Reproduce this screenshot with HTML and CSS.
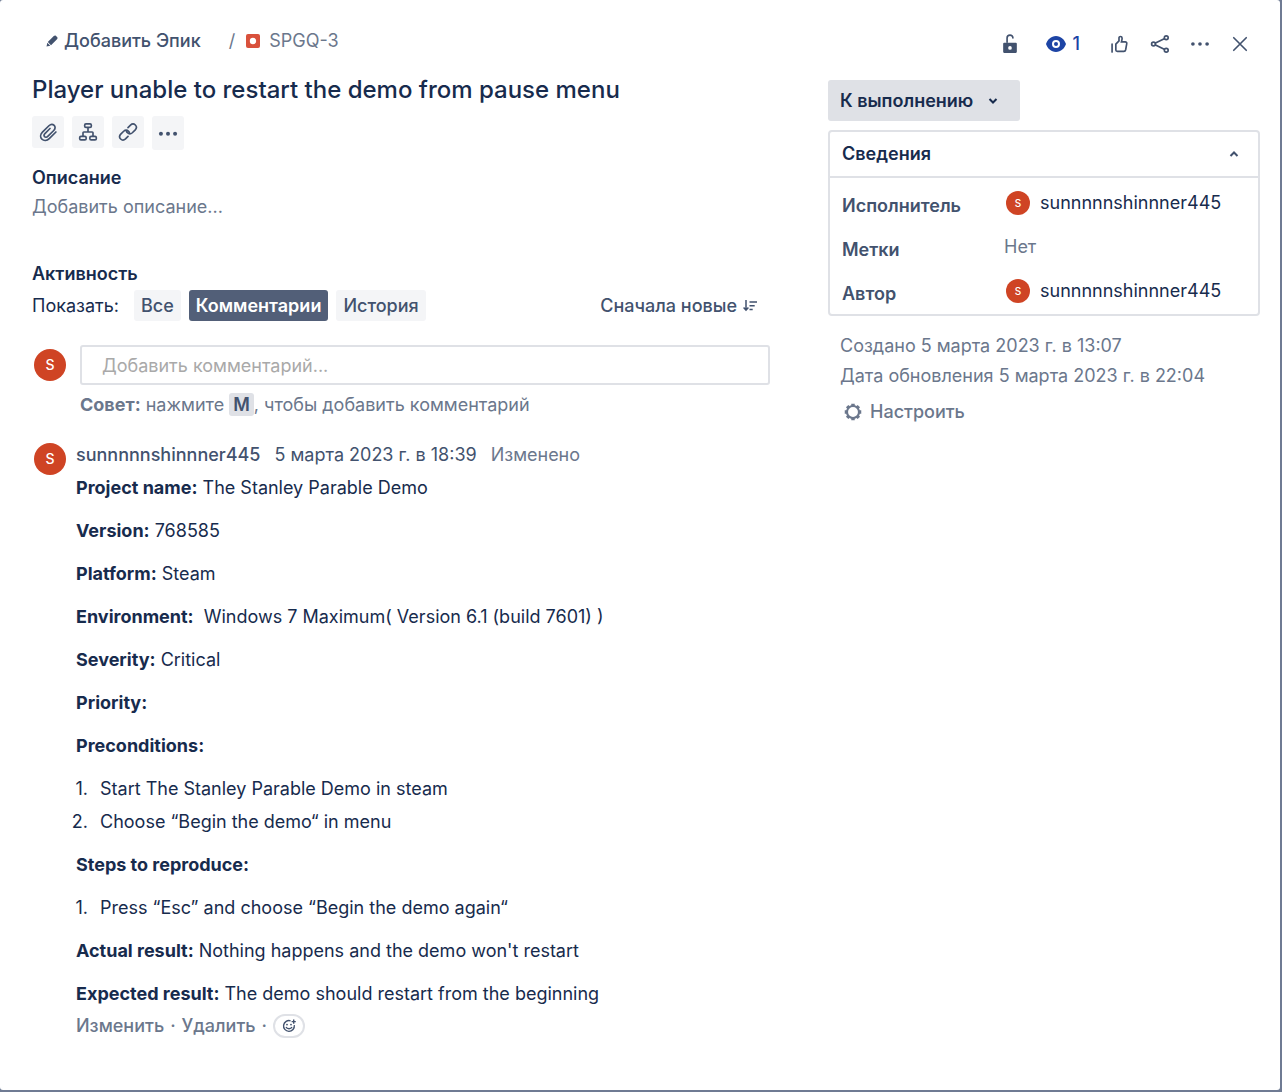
FILE: index.html
```html
<!DOCTYPE html>
<html lang="ru">
<head>
<meta charset="utf-8">
<meta name="viewport" content="width=device-width, initial-scale=1">
<title>SPGQ-3</title>
<link rel="stylesheet" href="styles.css">
</head>
<body>
<main class="dialog">
  <section class="issue">
    <nav class="crumbs">
      <button class="add-epic" type="button">
        <svg class="pencil" viewBox="0 0 12 12"><path d="M0.500 11.500l.8-3.700 3 2.900zM1.800 7l6-6c.8-.7 1.600-.7 2.200-.1l1.100 1.100c.6.600.6 1.500-.1 2.200l-6 6z" fill="currentColor"/></svg>
        Добавить Эпик
      </button>
      <span class="slash">/</span>
      <svg class="bug" viewBox="0 0 14 14"><rect width="14" height="14" rx="2" fill="#d9513c"/><circle cx="7" cy="7" r="3.2" fill="#fff"/></svg>
      <a class="key" href="#">SPGQ-3</a>
    </nav>
    <h1 class="title">Player unable to restart the demo from pause menu</h1>
    <div class="tools">
      <button class="tool" type="button" aria-label="Прикрепить"><svg viewBox="0 0 24 24"><path d="M21.500 12l-8 7.900c-2.700 2.600-6.500 2.800-8.800.7-2.200-2.200-2-5.800.6-8.400l7.800-7.700c2-1.900 4.700-2 6.300-.4s1.400 4.200-.5 6.100l-7.200 7.100c-1.200 1.200-2.800 1.300-3.800.3-.9-1-.8-2.500.4-3.700l6.100-6.100"/></svg></button>
      <button class="tool" type="button" aria-label="Подзадача"><svg viewBox="0 0 24 24"><rect x="8" y="2.300" width="8" height="4.200" rx="1.600"/><rect x="2" y="17.300" width="7.800" height="4.200" rx="1.600"/><rect x="14.200" y="17.300" width="7.800" height="4.200" rx="1.600"/><path d="M12 7v5M6 17v-4c0-.7.300-1 1-1h10c.7 0 1 .3 1 1v4"/></svg></button>
      <button class="tool" type="button" aria-label="Связать"><svg viewBox="0 0 24 24"><path d="M12 6.700l3-3c1.700-1.600 4.200-1.700 5.800-.1s1.500 4.100-.1 5.800l-3.500 3.500c-1.700 1.600-4.300 1.600-5.900 0-.5-.5-.8-1-1-1.600M12 17.300l-3 3c-1.700 1.600-4.200 1.700-5.800.1s-1.500-4.100.1-5.800l3.500-3.500c1.700-1.600 4.300-1.600 5.900 0 .5.500.8 1 1 1.600"/></svg></button>
      <button class="tool tool-more" type="button" aria-label="Ещё"><svg viewBox="0 0 24 24"><g class="fill"><circle cx="3.500" cy="13" r="2.400"/><circle cx="12" cy="13" r="2.400"/><circle cx="20.500" cy="13" r="2.400"/></g></svg></button>
    </div>
    <h2 class="heading description">Описание</h2>
    <p class="empty">Добавить описание...</p>

    <h2 class="heading activity">Активность</h2>
    <div class="filters">
      <span class="show">Показать:</span>
      <button class="filter" type="button">Все</button>
      <button class="filter active" type="button">Комментарии</button>
      <button class="filter" type="button">История</button>
      <button class="sort" type="button">Сначала новые
        <svg viewBox="0 0 14 12" fill="none" stroke="currentColor" stroke-width="1.500"><path d="M3 0v10M.6 7.600L3 10.200l2.400-2.600M6.500 2H14M6.500 5.800h5.200M6.500 9.600h3.200"/></svg>
      </button>
    </div>

    <div class="entry new-comment">
      <span class="avatar">S</span>
      <div class="field">
        <input class="input" type="text" aria-label="Комментарий" placeholder="Добавить комментарий...">
        <p class="tip"><b>Совет:</b> нажмите <kbd>M</kbd>, чтобы добавить комментарий</p>
      </div>
    </div>

    <article class="entry comment">
      <span class="avatar">S</span>
      <div class="content">
        <header class="meta"><a class="author" href="#">sunnnnnshinnner445</a><time>5 марта 2023 г. в 18:39</time><span class="edited">Изменено</span></header>
        <div class="text">
          <p><b>Project name:</b> The Stanley Parable Demo</p>
          <p><b>Version:</b> 768585</p>
          <p><b>Platform:</b> Steam</p>
          <p><b>Environment:</b>&nbsp; Windows 7 Maximum( Version 6.1 (build 7601) )</p>
          <p><b>Severity:</b> Critical</p>
          <p><b>Priority:</b></p>
          <p><b>Preconditions:</b></p>
          <ol><li>Start The Stanley Parable Demo in steam</li><li>Choose “Begin the demo“ in menu</li></ol>
          <p><b>Steps to reproduce:</b></p>
          <ol><li>Press “Esc” and choose “Begin the demo again“</li></ol>
          <p><b>Actual result:</b> Nothing happens and the demo won't restart</p>
          <p><b>Expected result:</b> The demo should restart from the beginning</p>
        </div>
        <footer class="actions">
          <button type="button">Изменить</button><span>·</span><button type="button">Удалить</button><span>·</span>
          <button class="react" type="button" aria-label="Добавить реакцию"><svg viewBox="0 0 14 14" fill="none" stroke="currentColor" stroke-width="1.400"><path d="M8.600 1.800a5.400 5.400 0 1 0 3.700 4.400M4 8c1 2.300 5 2.300 6 0"/><g fill="currentColor" stroke="none"><circle cx="5" cy="5.600" r=".9"/><circle cx="9" cy="5.600" r=".9"/><path d="M11 .5h1.400v1.400h1.400v1.400h-1.400v1.400H11V3.300H9.600V1.900H11z"/></g></svg></button>
        </footer>
      </div>
    </article>
  </section>

  <aside class="side">
    <div class="top">
      <button class="icon" type="button" aria-label="Доступ"><svg viewBox="0 0 24 24"><path class="fill" fill-rule="evenodd" d="M5 10.500h14c.8 0 1.200.4 1.200 1.200v9.600c0 .8-.7 1.500-1.500 1.500H5.300c-.8 0-1.500-.7-1.500-1.500v-9.600c0-.8.4-1.200 1.200-1.200zM12 14.500a2.200 2.200 0 1 0 0 4.400 2.200 2.200 0 0 0 0-4.400z"/><path d="M8.500 10V4.800a3.500 3.500 0 0 1 7 0"/></svg></button>
      <button class="icon watch" type="button" aria-label="Наблюдатели: 1"><svg viewBox="0 0 20 16"><path class="fill" fill-rule="evenodd" d="M10 0c5 0 8.600 3.700 10 8-1.400 4.300-5 8-10 8S1.400 12.300 0 8C1.400 3.700 5 0 10 0zm0 4a4 4 0 1 0 0 8 4 4 0 0 0 0-8z"/><circle class="fill" cx="10" cy="8" r="2"/></svg><span>1</span></button>
      <button class="icon" type="button" aria-label="Голосовать"><svg viewBox="0 0 24 24"><path d="M2.500 12v9.500M7 19.200v-7l3.800-3.900V4.500c0-2 3.500-2.200 3.700.4.100 1.500-.4 3-.8 4.600h4.600c1.500 0 2 1 1.800 2.100l-1.300 7.300c-.3 1.400-1 1.900-2.200 1.900H8.800c-1.200 0-1.800-.5-1.800-1.600z"/></svg></button>
      <button class="icon" type="button" aria-label="Поделиться"><svg viewBox="0 0 24 24"><circle cx="4.200" cy="12" r="2.300"/><circle cx="19.500" cy="4.500" r="2.300"/><circle cx="19.500" cy="19.500" r="2.300"/><path d="M6.600 10.800l10.500-5.100M6.600 13.200l10.500 5.100"/></svg></button>
      <button class="icon" type="button" aria-label="Действия"><svg viewBox="0 0 24 24"><g class="fill"><circle cx="3.500" cy="12" r="2.200"/><circle cx="12" cy="12" r="2.200"/><circle cx="20.500" cy="12" r="2.200"/></g></svg></button>
      <button class="icon" type="button" aria-label="Закрыть"><svg viewBox="0 0 24 24"><path d="M4.500 4.500l15 15M19.500 4.500l-15 15"/></svg></button>
    </div>
    <button class="status" type="button">К выполнению <svg class="chevron" viewBox="0 0 10 10"><path d="M1.500 3l3.500 3.500L8.500 3"/></svg></button>
    <section class="details">
      <h2 class="details-head"><button type="button" aria-expanded="true">Сведения <svg class="chevron" viewBox="0 0 10 10"><path d="M1.500 7L5 3.500 8.500 7"/></svg></button></h2>
      <dl class="rows">
        <div class="row"><dt>Исполнитель</dt><dd><span class="avatar small">S</span>sunnnnnshinnner445</dd></div>
        <div class="row"><dt>Метки</dt><dd class="none">Нет</dd></div>
        <div class="row"><dt>Автор</dt><dd><span class="avatar small">S</span>sunnnnnshinnner445</dd></div>
      </dl>
    </section>
    <div class="dates">
      <p>Создано 5 марта 2023 г. в 13:07</p>
      <p>Дата обновления 5 марта 2023 г. в 22:04</p>
    </div>
    <button class="configure" type="button"><svg viewBox="0 0 24 24"><circle cx="12" cy="12" r="8" fill="none" stroke="currentColor" stroke-width="2.800"/><path d="M12 1v3M12 20v3M1 12h3M20 12h3M4.200 4.200l2.200 2.200M17.600 17.600l2.200 2.200M4.200 19.800l2.200-2.200M17.600 6.400l2.200-2.200" stroke="currentColor" stroke-width="4.600"/></svg>Настроить</button>
  </aside>
</main>
</body>
</html>
```
FILE: styles.css
```css
* { box-sizing: border-box; }
body {
  margin: 0;
  background: #6f7b93;
  color: #172b4d;
  font: 18px/24px Inter, "Liberation Sans", sans-serif;
}
h1, h2, p, ol, dl, dd { margin: 0; padding: 0; }
button { margin: 0; padding: 0; border: 0; background: none; color: inherit; font: inherit; cursor: pointer; }
a { color: inherit; text-decoration: none; }
svg { display: block; flex: none; }
b { font-weight: 700; }

.dialog {
  display: grid;
  grid-template-columns: minmax(0, 1fr) 432px;
  gap: 58px;
  min-height: calc(100vh - 2px);
  margin: 0 2px 2px 0;
  padding: 25px 20px 48px 32px;
  border-radius: 3px;
  background: #fff;
}

.crumbs { display: flex; align-items: center; height: 32px; color: #6b778c; }
.add-epic { display: flex; align-items: center; gap: 6px; margin: 0 28px 0 14px; color: #42526e; font-weight: 500; }
.pencil { width: 12px; height: 12px; }
.bug { width: 14px; height: 14px; margin: 0 9px 0 11px; }
.title { margin-top: 17px; font-size: 24px; line-height: 32px; font-weight: 500; }

.tools { display: flex; align-items: flex-start; gap: 8px; margin-top: 10px; }
.tool { display: grid; place-items: center; width: 32px; height: 32px; border-radius: 3px; background: #f4f5f7; color: #42526e; }
.tool-more { height: 34px; }
.tool svg, .icon svg { width: 20px; height: 20px; fill: none; stroke: currentColor; stroke-width: 2; stroke-linecap: round; }
.tool .fill, .icon .fill { fill: currentColor; stroke: none; }

.heading { font-size: 18px; line-height: 24px; font-weight: 600; }
.description { margin-top: 16px; }
.empty { margin-top: 5px; color: #6b778c; }
.activity { margin-top: 43px; }

.filters { display: flex; align-items: center; gap: 8px; height: 31px; margin-top: 4px; }
.show { margin-right: 7px; }
.filter { height: 31px; padding: 0 7px; border-radius: 3px; background: #f4f5f7; color: #42526e; font-weight: 500; }
.filter.active { background: #525f78; color: #fff; font-weight: 600; }
.sort { display: flex; align-items: center; gap: 6px; margin: 0 13px 0 auto; color: #42526e; font-weight: 500; }
.sort svg { width: 14px; height: 12px; }

.entry { display: flex; align-items: flex-start; }
.avatar { display: grid; place-items: center; flex: none; width: 32px; height: 32px; margin-left: 2px; border-radius: 50%; background: #cf4424; color: #fff; font-size: 14px; font-weight: 500; }
.avatar.small { width: 24px; height: 24px; font-size: 10px; }
.new-comment { gap: 14px; margin-top: 24px; }
.new-comment .avatar { margin-top: 4px; }
.field { flex: 1; }
.input { display: block; width: 100%; height: 40px; padding: 0 20px; border: 2px solid #dfe1e6; border-radius: 3px; background: #fff; color: inherit; font: inherit; }
.input::placeholder { color: #a9a9a9; opacity: 1; }
.tip { margin-top: 8px; color: #6b778c; }
.tip kbd { padding: 1px 4px; border-radius: 3px; background: #dfe1e6; color: #42526e; font: inherit; font-weight: 600; }

.comment { gap: 10px; margin-top: 26px; }
.content { flex: 1; }
.meta { display: flex; gap: 14px; color: #42526e; }
.author { font-weight: 500; }
.edited { color: #6b778c; }
.text { display: grid; gap: 12px; margin-top: 5px; line-height: 31px; }
.text ol { display: grid; gap: 2px; margin-left: -8px; list-style: none; counter-reset: step; }
.text li { display: flex; gap: 12px; counter-increment: step; }
.text li::before { content: counter(step) "."; width: 20px; text-align: right; }
.actions { display: flex; align-items: center; gap: 6px; margin-top: 5px; color: #6b778c; font-weight: 500; }
.react { display: grid; place-items: center; width: 32px; height: 24px; border: 2px solid #dfe1e6; border-radius: 12px; color: #42526e; }
.react svg { width: 14px; height: 14px; }

.side { display: flex; flex-direction: column; align-items: flex-start; }
.top { display: flex; align-items: center; align-self: flex-end; gap: 20px; height: 38px; margin-right: 10px; color: #42526e; }
.icon { display: flex; align-items: center; gap: 7px; }
.watch { margin: 0 10px 0 6px; color: #1d44a5; font-weight: 500; }
.watch svg { height: 16px; }
.status { display: flex; align-items: center; gap: 15px; height: 41px; margin-top: 17px; padding: 0 22px 0 12px; border-radius: 3px; background: #dfe1e6; font-weight: 600; }
.chevron { width: 10px; height: 10px; fill: none; stroke: #42526e; stroke-width: 2; }
.status .chevron { stroke: #172b4d; }

.details { align-self: stretch; margin-top: 9px; border: 2px solid #dfe1e6; border-radius: 4px; }
.details-head { font-size: 18px; line-height: 24px; border-bottom: 2px solid #dfe1e6; }
.details-head button { display: flex; align-items: center; justify-content: space-between; width: 100%; height: 44px; padding: 0 19px 0 12px; font-weight: 600; }
.rows { padding: 3px 12px 1px; }
.row { display: grid; grid-template-columns: 162px minmax(0, 1fr); height: 44px; }
.row dt { padding-top: 13px; color: #42526e; font-weight: 600; }
.row dd { display: flex; align-items: center; gap: 10px; height: 44px; }
.row .none { color: #6b778c; }
.dates { margin: 15px 0 0 12px; color: #6b778c; line-height: 30px; }
.configure { display: flex; align-items: center; gap: 8px; margin: 9px 0 0 16px; color: #6b778c; font-weight: 500; }
.configure svg { width: 18px; height: 18px; }
```
